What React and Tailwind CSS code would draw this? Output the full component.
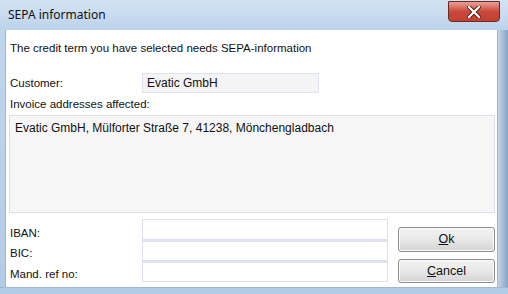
import React from 'react';

const Field = ({ className = '' }) => (
  <div className={`h-[21px] bg-white border border-[#dcdfec] ${className}`} />
);

const WinButton = ({ hot, rest, className = '' }) => (
  <button
    type="button"
    className={`w-[97px] rounded-[3px] border border-[#8c8c8c] bg-gradient-to-b from-[#f4f4f4] via-[#e8e8e8] to-[#d4d4d4] text-[12.5px] text-[#111] shadow-[inset_0_0_0_1px_#fbfbfb] ${className}`}
  >
    <span className="underline">{hot}</span>{rest}
  </button>
);

export default function App() {
  return (
    <div
      className="w-[508px] h-[294px] overflow-hidden flex flex-col bg-gradient-to-b from-[#c2d7ee] to-[#b3cbe6]"
      style={{ fontFamily: '"Liberation Sans", Arial, sans-serif' }}
    >
      {/* TITLE BAR */}
      <div className="h-[30px] flex items-start bg-gradient-to-b from-[#d3e3f4] via-[#c8dbf0] to-[#bcd3ec]">
        <div
          className="pl-[8px] pt-[9px] text-[12px] text-[#111] leading-none"
          style={{ fontFamily: '"Noto Sans", "Open Sans", sans-serif' }}
        >
          SEPA information
        </div>
        <div className="flex-1" />
        <div className="mr-[8px] mt-[1px] w-[52px] h-[21px] rounded-b-[4px] border border-[#6b2a24] bg-gradient-to-b from-[#e8a093] via-[#c9483a] to-[#c2412f] flex items-center justify-center">
          <svg width="14" height="12" viewBox="0 0 14 12">
            <path d="M2 1 L12 11 M12 1 L2 11" stroke="#4a1a14" strokeWidth="4" strokeLinecap="square" />
            <path d="M2 1 L12 11 M12 1 L2 11" stroke="#ffffff" strokeWidth="2.2" strokeLinecap="square" />
          </svg>
        </div>
      </div>

      {/* BODY ROW */}
      <div className="flex flex-1">
        <div className="w-[6px] border-r border-[#a3b6cc]" />
        <div className="w-[491px] h-[257px] bg-white flex flex-col text-[11.5px] text-[#111]">
          <div className="pl-[4px] mt-[11px] h-[14px] leading-[14px]">
            The credit term you have selected needs SEPA-information
          </div>

          <div className="flex items-center pl-[4px] mt-[18px]">
            <div className="w-[132px] leading-[14px]">Customer:</div>
            <div className="w-[177px] h-[20px] bg-[#f4f4f4] border border-[#dde3ef] pl-[4px] flex items-center text-[12px]">
              Evatic GmbH
            </div>
          </div>

          <div className="pl-[4px] mt-[4px] h-[14px] leading-[14px]">Invoice addresses affected:</div>

          <div className="ml-[3px] mt-[4px] w-[486px] h-[98px] bg-[#f6f6f6] border border-[#dcdfe8] px-[5px] pt-[5px] text-[12px] leading-[14px]">
            Evatic GmbH, Mülforter Straße 7, 41238, Mönchengladbach
          </div>

          <div className="flex mt-[6px]">
            <div className="flex flex-col pl-[4px]">
              <div className="flex">
                <div className="w-[132px] pt-[7px] leading-[14px]">IBAN:</div>
                <Field className="w-[246px]" />
              </div>
              <div className="flex">
                <div className="w-[132px] pt-[6px] leading-[14px]">BIC:</div>
                <Field className="w-[246px] border-t-[#e0e3f4] border-t-2" />
              </div>
              <div className="flex">
                <div className="w-[132px] pt-[6px] leading-[14px]">Mand. ref no:</div>
                <Field className="w-[246px] border-t-[#e0e3f4] border-t-2 h-[20px]" />
              </div>
            </div>
            <div className="flex flex-col ml-[10px] pt-[8px] gap-[7px]">
              <WinButton hot="O" rest="k" className="h-[25px]" />
              <WinButton hot="C" rest="ancel" className="h-[24px]" />
            </div>
          </div>
        </div>
        <div className="flex-1 border-l border-[#a3b6cc] bg-gradient-to-r from-[#c0d5ec] to-[#8aa3c0]" />
      </div>

      {/* BOTTOM FRAME */}
      <div className="h-[7px] border-t border-[#a3b6cc]" />
    </div>
  );
}
